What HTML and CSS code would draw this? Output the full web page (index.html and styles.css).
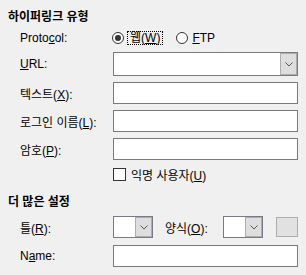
FILE: index.html
```html
<!DOCTYPE html>
<html>
<head>
  <meta charset="utf-8">
  <meta name="viewport" content="width=device-width">
  <title>하이퍼링크</title>
  <link rel="stylesheet" href="styles.css">
</head>
<body>
	<div class="panel">
		<h3 class="section">하이퍼링크 유형</h3>
		<div class="row row-radio">
			<span class="label">Proto<u>c</u>ol:</span>
			<span class="radio checked"></span>
			<span class="focus">웹(<u>W</u>)</span>
			<span class="radio second"></span>
			<span class="opt"><u>F</u>TP</span>
		</div>
		<div class="row row-combo">
			<span class="label"><u>U</u>RL:</span>
			<div class="combo wide">
				<span class="value"></span>
				<span class="drop"><svg width="8" height="5" viewBox="0 0 8 5"><polyline points="0.5,0.5 4,4 7.5,0.5" fill="none" stroke="#555" stroke-width="1"/></svg></span>
			</div>
		</div>
		<div class="row">
			<span class="label">텍스트(<u>X</u>):</span>
			<div class="field"></div>
		</div>
		<div class="row">
			<span class="label">로그인 이름(<u>L</u>):</span>
			<div class="field"></div>
		</div>
		<div class="row">
			<span class="label">암호(<u>P</u>):</span>
			<div class="field"></div>
		</div>
		<div class="row row-check">
			<span class="label"></span>
			<span class="check"></span>
			<span class="opt">익명 사용자(<u>U</u>)</span>
		</div>

		<h3 class="section section2">더 많은 설정</h3>
		<div class="row row-frame">
			<span class="label">틀(<u>R</u>):</span>
			<div class="combo small">
				<span class="value"></span>
				<span class="drop"><svg width="8" height="5" viewBox="0 0 8 5"><polyline points="0.5,0.5 4,4 7.5,0.5" fill="none" stroke="#555" stroke-width="1"/></svg></span>
			</div>
			<span class="label2">양식(<u>O</u>):</span>
			<div class="combo small">
				<span class="value"></span>
				<span class="drop"><svg width="8" height="5" viewBox="0 0 8 5"><polyline points="0.5,0.5 4,4 7.5,0.5" fill="none" stroke="#555" stroke-width="1"/></svg></span>
			</div>
			<span class="btn"></span>
		</div>
		<div class="row row-name">
			<span class="label">N<u>a</u>me:</span>
			<div class="field"></div>
		</div>
	</div>
</body>
</html>
```

FILE: styles.css
```css
	html,body{
		margin:0;
		padding:0;
		background:#F0F0F0;
	}
	body{
		font-family:"Liberation Sans","Noto Sans CJK KR",sans-serif;
		font-size:12px;
		color:#000;
	}
	.panel{
		padding:7px 0 0 8px;
	}
	.section{
		margin:0;
		font-size:12px;
		font-weight:bold;
		line-height:20px;
	}
	.section2{
		margin-top:10px;
	}
	u{
		text-decoration:underline;
		text-underline-offset:1px;
	}
	.row{
		display:flex;
		align-items:center;
		height:22px;
		margin-top:6px;
		padding-left:12px;
	}
	.label{
		width:93px;
		flex:none;
		white-space:nowrap;
	}
	.row-radio{
		height:20px;
		margin-top:1px;
	}
	.row-combo{
		height:24px;
		margin-top:4px;
	}
	.row-check{
		height:16px;
	}
	.row-frame{
		margin-top:4px;
	}
	.row-name{
		margin-top:7px;
	}

	/* radio + checkbox */
	.radio{
		width:10px;
		height:10px;
		border:1px solid #333;
		border-radius:50%;
		background:#FFF;
		flex:none;
		position:relative;
		margin-left:-1px;
	}
	.radio.checked::after{
		content:"";
		position:absolute;
		left:2px;
		top:2px;
		width:6px;
		height:6px;
		border-radius:50%;
		background:#333;
	}
	.radio.second{
		margin-left:13px;
	}
	.focus{
		margin-left:3px;
		padding:0 2px;
		height:12px;
		line-height:12px;
		border:1px dotted #000;
		white-space:nowrap;
	}
	.opt{
		margin-left:4px;
		white-space:nowrap;
	}
	.check{
		width:11px;
		height:11px;
		border:1px solid #333;
		background:#FFF;
		flex:none;
	}
	.row-check .opt{
		margin-left:5px;
	}

	/* fields */
	.field{
		width:185px;
		height:22px;
		box-sizing:border-box;
		border:1px solid #7A7A7A;
		background:#FFF;
	}
	.combo{
		display:flex;
		box-sizing:border-box;
		border:1px solid #7A7A7A;
		background:#FFF;
		flex:none;
	}
	.combo .value{
		flex:1;
	}
	.combo .drop{
		width:15px;
		display:flex;
		align-items:center;
		justify-content:center;
		background:#DEDEDE;
		border:1px solid #ADADAD;
	}
	.combo.wide{
		width:185px;
		height:24px;
	}
	.combo.small{
		width:40px;
		height:22px;
		border-color:#7A7A85;
	}
	.label2{
		margin-left:12px;
		width:58px;
		flex:none;
		white-space:nowrap;
	}
	.btn{
		margin-left:13px;
		width:22px;
		height:20px;
		box-sizing:border-box;
		background:#E1E1E1;
		border:1px solid #ADADAD;
	}
```
